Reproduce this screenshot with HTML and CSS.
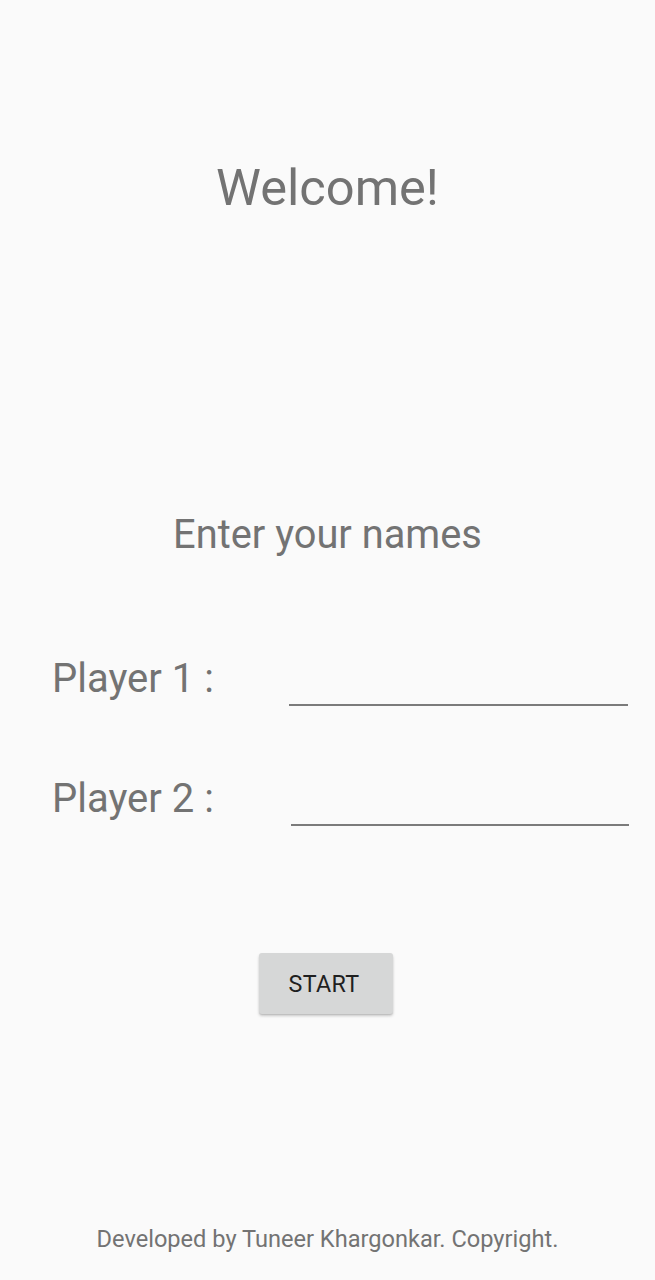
FILE: index.html
```html
<!DOCTYPE html>
<html lang="en">
<head>
<meta charset="utf-8">
<title>Welcome</title>
<link rel="stylesheet" href="styles.css">
</head>
<body>
<div class="screen">
  <h1 class="title">Welcome!</h1>
  <h2 class="subtitle">Enter your names</h2>
  <div class="players">
    <div class="row">
      <label class="label" for="p1">Player 1 :</label>
      <input class="field" id="p1" type="text">
    </div>
    <div class="row">
      <label class="label" for="p2">Player 2 :</label>
      <input class="field field-2" id="p2" type="text">
    </div>
  </div>
  <div class="actions">
    <button class="start" type="button">START</button>
  </div>
  <p class="footer">Developed by Tuneer Khargonkar. Copyright.</p>
</div>
</body>
</html>
```

FILE: styles.css
```css
html, body {
  margin: 0;
  padding: 0;
  background: #fafafa;
}

body {
  font-family: Roboto, "Liberation Sans", sans-serif;
  color: #737373;
}

.screen {
  display: flex;
  flex-direction: column;
  min-height: 1280px;
  box-sizing: border-box;
  padding-top: 158px;
}

.title {
  margin: 0;
  font-size: 50.6px;
  line-height: 60px;
  font-weight: 400;
  text-align: center;
}

.subtitle {
  margin: 294px 0 0;
  font-size: 39.8px;
  line-height: 46px;
  font-weight: 400;
  text-align: center;
}

.players {
  margin-top: 97px;
  display: flex;
  flex-direction: column;
  gap: 69px;
}

.row {
  display: flex;
  align-items: flex-start;
  padding-left: 52px;
}

.label {
  width: 237px;
  font-size: 40px;
  line-height: 48px;
}

.field {
  width: 339px;
  height: 51px;
  box-sizing: border-box;
  margin: 0;
  padding: 0;
  border: none;
  border-bottom: 2px solid #7b7b7b;
  background: transparent;
  outline: none;
  font-family: inherit;
  font-size: 30px;
}

.field-2 {
  margin-left: 2px;
  width: 338px;
}

.actions {
  margin-top: 127px;
  display: flex;
  justify-content: center;
  padding-right: 3px;
}

.start {
  width: 134px;
  height: 61px;
  border: none;
  border-radius: 3px;
  background: #d6d7d7;
  color: #1f1f1f;
  font-family: inherit;
  font-size: 23.3px;
  font-weight: 400;
  letter-spacing: 0.3px;
  box-shadow: 0 2px 3px rgba(0, 0, 0, 0.2), 0 1px 1px rgba(0, 0, 0, 0.08);
  padding: 0 4px 0 0;
}

.footer {
  margin: auto 0 28px;
  font-size: 23.6px;
  line-height: 26px;
  text-align: center;
}
```
